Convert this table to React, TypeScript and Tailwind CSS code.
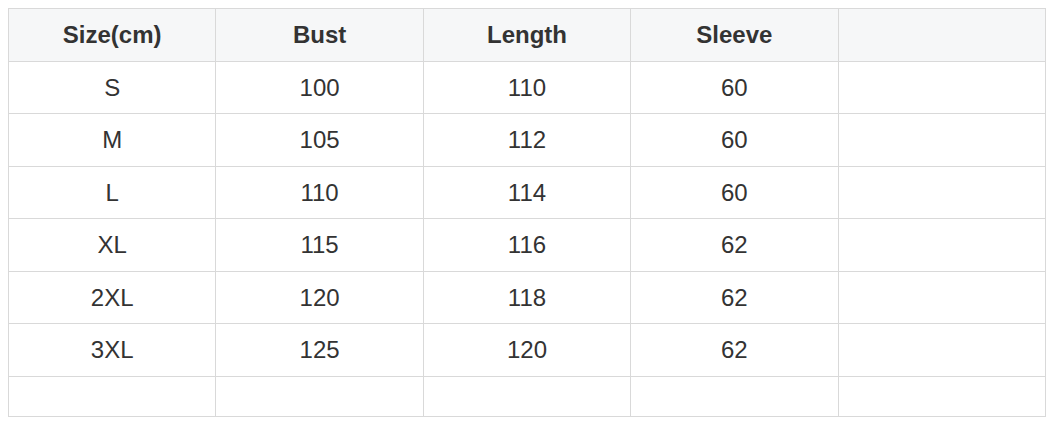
const headers = ["Size(cm)", "Bust", "Length", "Sleeve", ""];

const rows = [
  ["S", "100", "110", "60", ""],
  ["M", "105", "112", "60", ""],
  ["L", "110", "114", "60", ""],
  ["XL", "115", "116", "62", ""],
  ["2XL", "120", "118", "62", ""],
  ["3XL", "125", "120", "62", ""],
  ["", "", "", "", ""],
];

const rowHeights = ["h-[52px]", "h-[53px]", "h-[52px]", "h-[53px]", "h-[52px]", "h-[53px]", "h-[40px]"];

export default function App() {
  return (
    <div className="w-[1060px] h-[433px] bg-white pt-[8px] pl-[8px] font-['Liberation_Sans',Arial,sans-serif] text-[#333333]">
      <table className="w-[1038px] border-collapse table-fixed border border-[#d4d4d4]">
        <thead>
          <tr className="h-[53px] bg-[#f6f7f8]">
            {headers.map((h, i) => (
              <th key={i} className="border border-[#d9d9d9] text-[24px] font-bold text-center align-middle p-0">
                {h}
              </th>
            ))}
          </tr>
        </thead>
        <tbody>
          {rows.map((row, r) => (
            <tr key={r} className={rowHeights[r]}>
              {row.map((cell, c) => (
                <td key={c} className="border border-[#d9d9d9] text-[24px] text-center align-middle p-0">
                  {cell}
                </td>
              ))}
            </tr>
          ))}
        </tbody>
      </table>
    </div>
  );
}
